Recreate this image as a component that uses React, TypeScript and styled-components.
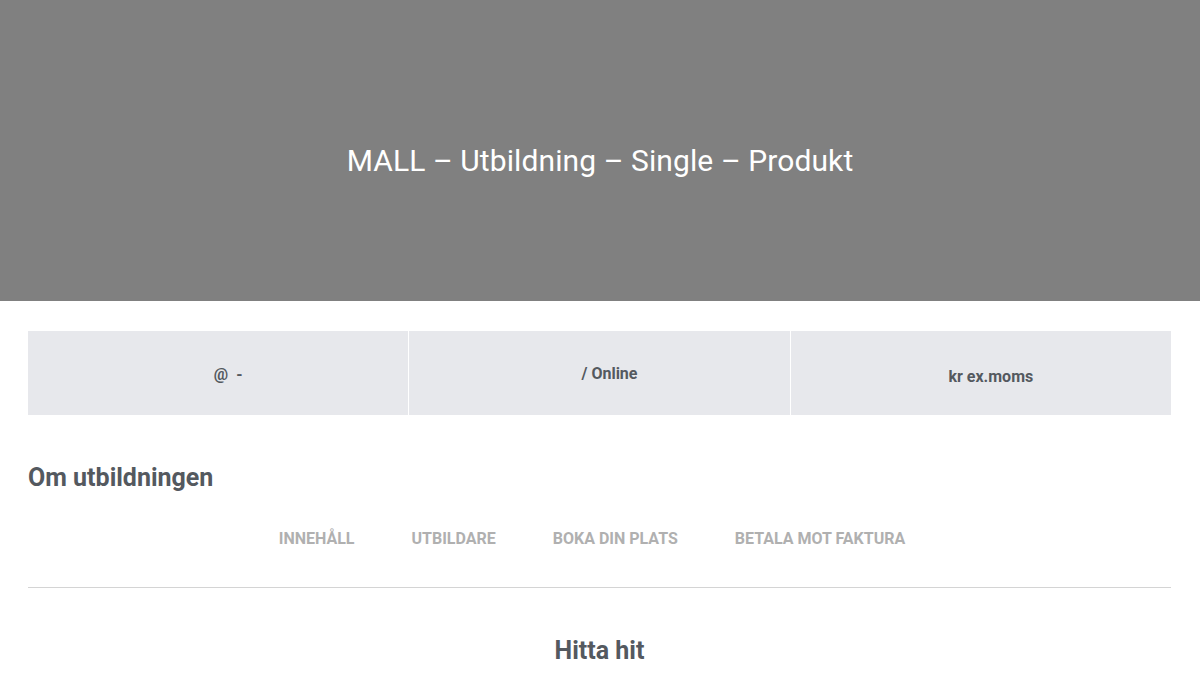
import React from "react";
import styled, { createGlobalStyle } from "styled-components";

const Global = createGlobalStyle`
  html, body { margin: 0; padding: 0; background: #fff; }
  body { font-family: Roboto, "Liberation Sans", sans-serif; }
`;

const Hero = styled.header`
  height: 301px;
  background: #808080;
  display: flex;
  align-items: center;
  justify-content: center;
`;

const HeroTitle = styled.h1`
  margin: 0;
  font-family: Roboto, sans-serif;
  font-weight: 400;
  font-size: 30px;
  color: #fff;
  letter-spacing: 0.1px;
  transform: translateY(10px);
`;

const Main = styled.main`
  padding: 30px 29px 0 28px;
`;

const InfoBar = styled.div`
  display: grid;
  grid-template-columns: 1fr 1fr 1fr;
  gap: 1px;
  background: #fff;
`;

const InfoCell = styled.div<{ $shift?: number }>`
  height: 84px;
  background: #e7e8ec;
  display: flex;
  align-items: center;
  justify-content: center;
  font-size: 16px;
  font-weight: 700;
  color: #54595f;
  padding-left: 20px;
  padding-top: ${(p) => p.$shift ?? 0}px;
  box-sizing: border-box;
`;

const SectionHeading = styled.h2`
  margin: 48px 0 0 0;
  font-size: 25px;
  font-weight: 700;
  color: #54595f;
  line-height: 30px;
`;

const TabBar = styled.nav`
  margin-top: 37px;
  padding-bottom: 39px;
  border-bottom: 1px solid #d4d4d4;
`;

const TabList = styled.div`
  display: flex;
  justify-content: center;
  padding-right: 15px;
`;

const Tab = styled.span`
  padding: 0 28.5px;
  font-size: 16px;
  font-weight: 700;
  text-transform: uppercase;
  color: #b0b0b0;
  line-height: 18px;
`;

const SubHeading = styled.h2`
  margin: 48px 0 0 0;
  text-align: center;
  font-size: 25px;
  font-weight: 700;
  color: #54595f;
  line-height: 30px;
`;

export default function App() {
  return (
    <>
      <Global />
      <Hero>
        <HeroTitle>MALL – Utbildning – Single – Produkt</HeroTitle>
      </Hero>
      <Main>
        <InfoBar>
          <InfoCell $shift={2}>@&nbsp; -</InfoCell>
          <InfoCell $shift={0}>/ Online</InfoCell>
          <InfoCell $shift={6}>kr ex.moms</InfoCell>
        </InfoBar>
        <SectionHeading>Om utbildningen</SectionHeading>
        <TabBar>
          <TabList>
            <Tab>Innehåll</Tab>
            <Tab>Utbildare</Tab>
            <Tab>Boka din plats</Tab>
            <Tab>Betala mot faktura</Tab>
          </TabList>
        </TabBar>
        <SubHeading>Hitta hit</SubHeading>
      </Main>
    </>
  );
}
